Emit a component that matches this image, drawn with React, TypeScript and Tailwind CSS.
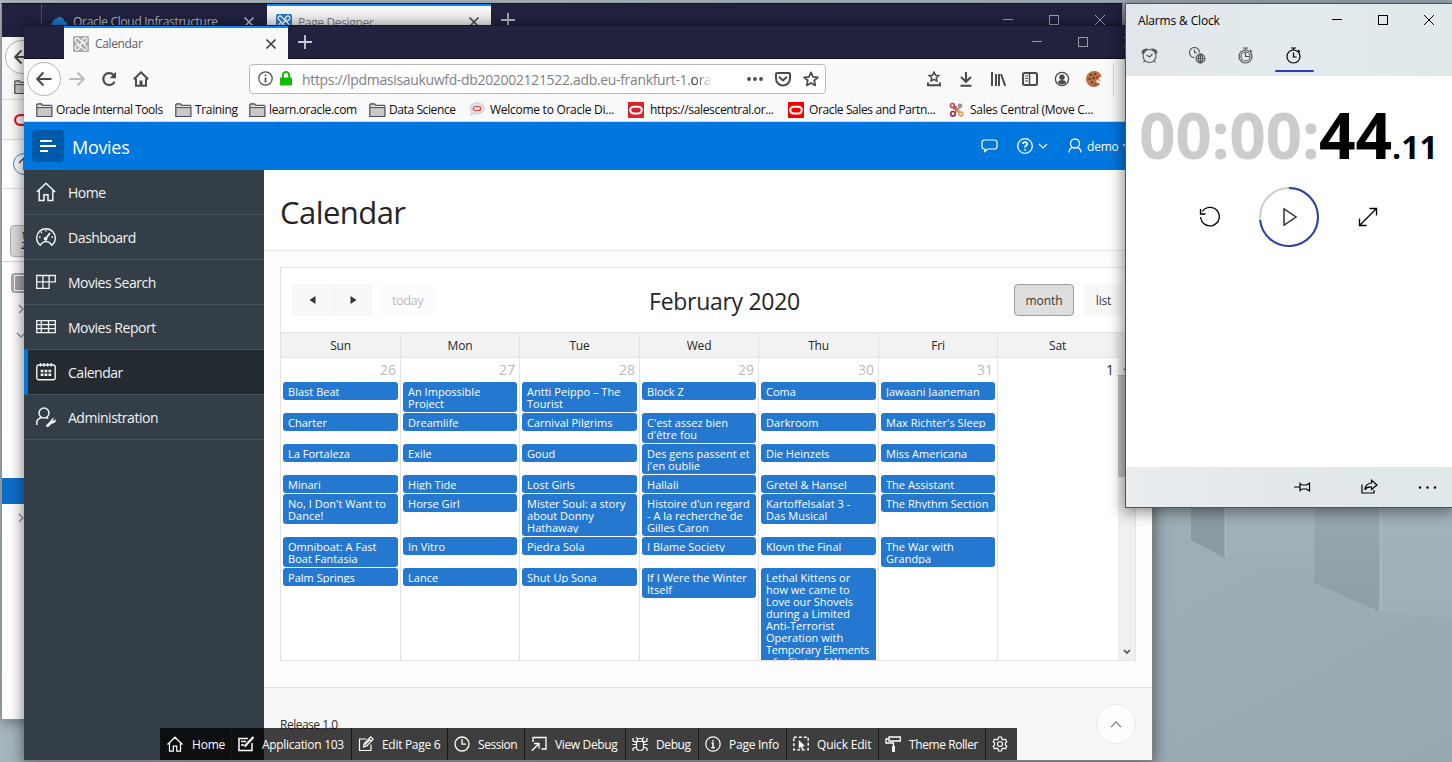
import type { ReactNode } from "react";

const FONT = "font-['Open_Sans','Noto_Sans',sans-serif]";

type IconProps = { className?: string };

function Svg({ size = 16, h, sw = 1.2, vb, className = "", children }: { size?: number; h?: number; sw?: number; vb?: string; className?: string; children: ReactNode }) {
  return (
    <svg width={size} height={h ?? size} viewBox={vb ?? `0 0 ${size} ${h ?? size}`} fill="none" stroke="currentColor" strokeWidth={sw} className={`block shrink-0 ${className}`}>
      {children}
    </svg>
  );
}

function ApexIcon({ fill }: { fill: string }) {
  return (
    <Svg>
      <rect width="16" height="16" rx="1.5" fill={fill} stroke="none" />
      <g strokeLinecap="round">
        <path d="M12 4l-8 8" stroke="#fff" strokeWidth="5" />
        <path d="M12 4l-8 8" stroke={fill} strokeWidth="2.800" />
        <path d="M4 4l8 8" stroke="#fff" strokeWidth="5" />
        <path d="M4 4l8 8" stroke={fill} strokeWidth="2.800" />
        <path d="M10.500 5.500l-5 5" stroke="#fff" strokeWidth="1.200" />
      </g>
    </Svg>
  );
}

function Folder({ className }: IconProps) {
  return (
    <Svg size={17} h={14} sw={1.2} className={className}>
      <path d="M.8 13V1.8q0-1 1-1h3.6l1.4 1.6H15q.9 0 .9.9V13q0 .5-.5.5H1.3q-.5 0-.5-.5z" fill="#c9c9cb" stroke="#4a4a4f" />
      <path d="M1.4 3.500h14" stroke="#e8e8ea" />
      <path d="M1.2 4.600h14.4" stroke="#4a4a4f" strokeWidth="1" />
    </Svg>
  );
}

function Close({ className }: IconProps) {
  return (
    <Svg size={12} sw={1.7} className={className}>
      <path d="M1.5 1.5l9 9M10.500 1.5l-9 9" />
    </Svg>
  );
}

function Plus({ className }: IconProps) {
  return (
    <Svg size={14} sw={1.8} className={className}>
      <path d="M7 0v14M0 7h14" />
    </Svg>
  );
}

function WinButtons({ className = "" }: IconProps) {
  return (
    <div className={`flex items-center ${className}`}>
      <Svg size={10} sw={1} className="mr-9"><path d="M0 4.500h10" /></Svg>
      <Svg size={10} sw={1} className="mr-9"><rect x=".5" y=".5" width="9" height="9" /></Svg>
      <Svg size={10} sw={1}><path d="M0 0l10 10M10 0L0 10" /></Svg>
    </div>
  );
}

function BackArrow() {
  return (
    <Svg size={16} sw={2}><path d="M15.500 8H1.500M7.500 1.500L1.200 8l6.300 6.500" /></Svg>
  );
}

function OracleMark({ bg }: { bg: string }) {
  return (
    <Svg sw={2}>
      <rect width="16" height="16" fill={bg} stroke="none" />
      <rect x="2.200" y="4.700" width="11.600" height="6.800" rx="3.400" stroke="#fff" />
    </Svg>
  );
}

function BackWindow() {
  return (
    <section className="absolute left-[1px] top-[3px] h-[717px] w-[1122px] overflow-hidden border border-[#8b959b] border-t-[#10122a] bg-white shadow-[0_2px_12px_rgba(0,0,0,0.35)]">
      <div className="flex h-[33px] items-start bg-[#20223e] text-[#aeb0bd]">
        <div className="ml-[39px] flex h-full w-[226px] items-center border-l border-[#4b4d64] pl-[9px] pt-0.5">
          <Svg size={16} h={12}><path d="M2.500 11.500a2.500 2.500 0 01-.8-4.800A3.600 3.600 0 015 3a4.300 4.300 0 018 2.500 3 3 0 01.6 6z" fill="#1a72c4" stroke="none" /></Svg>
          <span className="ml-1.5 w-[170px] whitespace-nowrap text-[12px] tracking-[-0.3px]">Oracle Cloud Infrastructure</span>
          <Close />
        </div>
        <div className="flex h-full w-[224px] items-center border-t-2 border-[#0a84ff] bg-gradient-to-b from-[#fafafa] to-[#d8d8d8] pl-[9px] text-[#77777c]">
          <ApexIcon fill="#2b78bd" />
          <span className="ml-1.5 w-[170px] pt-0.5 text-[12px] tracking-[-0.35px]">Page Designer</span>
          <Close className="text-[#4a4a4f]" />
        </div>
        <Plus className="ml-[10px] mt-[9px]" />
        <WinButtons className="ml-auto mr-[17px] mt-[11px] text-[#9a9bab]" />
      </div>
      <div className="flex w-[22px] flex-col overflow-hidden">
        <div className="flex h-[62px] flex-col bg-[#f9f9fa]">
          <div className="ml-[3px] mt-[3px] grid size-[34px] shrink-0 place-items-center rounded-full border border-[#b5b5b7] bg-white text-[#4a4a4f]"><BackArrow /></div>
          <Folder className="ml-3 mt-[6px]" />
        </div>
        <div className="flex h-[41px] items-center border-y border-[#d9d9da] bg-[#fafafa] pl-3">
          <Svg size={22} h={12} sw={2.200}><rect x="1.100" y="1.100" width="19" height="9.800" rx="4.900" stroke="#dd1a1f" /></Svg>
        </div>
        <div className="flex h-[49px] items-center border-b border-[#dcdcdc] pl-[11px]">
          <Svg size={22} sw={1}><circle cx="11" cy="11" r="10.500" stroke="#3b8ed0" /><path d="M6 10l5-5 5 5M11 5v12" stroke="#555" strokeWidth="1.500" /></Svg>
        </div>
        <div className="h-[73px] border-b border-[#d5d5d5] pt-9">
          <div className="ml-2 h-8 w-8 rounded-sm border border-[#b0b0b0] bg-[#dedede] pl-[10px] pt-[5px] text-[9px] leading-[10px] text-black">1<br />2</div>
        </div>
        <div className="flex h-[216px] flex-col text-[#888]">
          <div className="ml-[9px] mt-[11px] h-5 w-8 rounded-sm bg-[#ababab] py-0.5 pl-[3px]"><div className="h-4 w-4 border border-white bg-[#a5a5a5]" /></div>
          <Svg size={6} h={10} className="ml-4 mt-[11px]"><path d="M1 1l4 4-4 4" /></Svg>
          <Svg size={10} h={6} className="ml-[14px] mt-[18px]"><path d="M1 1l4 4 4-4" /></Svg>
        </div>
        <div className="h-[26px] bg-[#0f6fc8]" />
        <Svg size={6} h={10} className="ml-4 mt-[9px] text-[#888]"><path d="M1 1l4 4-4 4" /></Svg>
      </div>
    </section>
  );
}

const bookmarks: { label: string; width: string; text: string; icon: ReactNode }[] = [
  { label: "Oracle Internal Tools", width: "w-[139px]", text: "ml-[3px] tracking-[-0.45px]", icon: <Folder /> },
  { label: "Training", width: "w-[74px]", text: "ml-[3px] tracking-[-0.35px]", icon: <Folder /> },
  { label: "learn.oracle.com", width: "w-[120px]", text: "ml-[3px] tracking-[-0.35px]", icon: <Folder /> },
  { label: "Data Science", width: "w-[100px]", text: "ml-[3px] tracking-[-0.4px]", icon: <Folder /> },
  {
    label: "Welcome to Oracle Di...", width: "w-[159px]", text: "ml-[5px] tracking-[-0.27px]",
    icon: (
      <Svg>
        <path d="M8 1c4 0 7 2.200 7 5.200S12 12 8 12c-1 0-1.800-.1-2.600-.3L2 13.500l1-3C1.700 9.400 1 8 1 6.300 1 3.200 4 1 8 1z" fill="#e2e0e0" stroke="#bdbdbd" strokeWidth=".7" />
        <rect x="4.300" y="4.500" width="7.400" height="4" rx="2" stroke="#dc4a4a" />
      </Svg>
    ),
  },
  { label: "https://salescentral.or...", width: "w-[160px]", text: "ml-[6px] tracking-[-0.33px]", icon: <OracleMark bg="#d8232b" /> },
  { label: "Oracle Sales and Partn...", width: "w-[161px]", text: "ml-[5px] tracking-[-0.38px]", icon: <OracleMark bg="#f00505" /> },
  {
    label: "Sales Central (Move C...", width: "w-[150px]", text: "ml-[5px] tracking-[-0.28px]",
    icon: (
      <Svg sw={1.700}>
        <path d="M5 5l6 6M11 5l-6 6" stroke="#9b7b74" />
        <circle cx="3.500" cy="3.500" r="2" stroke="#d4454c" /><circle cx="5.800" cy="5.800" r="1.300" stroke="#d4454c" /><circle cx="11" cy="3.800" r="1.500" stroke="#8d8d8d" />
        <circle cx="4" cy="11.800" r="2.300" stroke="#9a2f52" /><circle cx="12" cy="12" r="1.800" stroke="#e6a153" /><circle cx="9.800" cy="9.800" r="1" stroke="#e6a153" />
      </Svg>
    ),
  },
];

function BrowserChrome() {
  return (
    <header className="shrink-0">
      <div className="flex h-[34px] items-start border-b border-t border-b-[#0d0e1c] border-t-[#15162c] bg-[#20223e]">
        <div className="ml-[40px] flex h-[34px] w-[224px] items-center border-t-2 border-[#0a84ff] bg-[#f9f9fa] pl-[9px] text-[#5c5c61]">
          <ApexIcon fill="#a9adb0" />
          <span className="ml-1.5 w-[170px] text-[12px] tracking-[-0.35px]">Calendar</span>
          <Close className="text-[#3f3f44]" />
        </div>
        <Plus className="ml-[10px] mt-[9px] text-[#c8c9d2]" />
        <WinButtons className="ml-auto mr-[18px] mt-[11px] text-[#9a9bab]" />
      </div>
      <div className="flex h-[39px] items-center bg-[#f9f9fa] pl-[3px] text-[#4a4a4f]">
        <div className="grid size-[34px] place-items-center rounded-full border border-[#b5b5b7] bg-white"><BackArrow /></div>
        <Svg size={16} sw={2} className="ml-2 text-[#b9b9bb]"><path d="M.5 8h14M8.500 1.500l6.300 6.500-6.300 6.500" /></Svg>
        <Svg size={16} sw={2} className="ml-4"><path d="M13.600 10.800A6 6 0 118 2c2.200 0 4 1 5.200 3" /><path d="M15 .8v6.400H8.600z" fill="currentColor" stroke="none" /></Svg>
        <Svg size={16} sw={2} className="ml-4"><path d="M.8 8.300L8 1.300l7.200 7" /><path d="M3 7.500v7.300h10V7.500" /><path d="M8 15V9.500" strokeWidth="3" /></Svg>
        <div className="ml-[100px] flex h-[30px] w-[577px] items-center rounded-sm border border-[#b9b9bb] bg-white pl-2">
          <Svg size={15} sw={1.200}><circle cx="7.500" cy="7.500" r="6.700" /><path d="M7.500 6.500v5M7.500 3.500v1.600" strokeWidth="1.700" /></Svg>
          <Svg size={14} h={15} className="ml-[6px] text-[#12bc00]"><rect x="1" y="6.500" width="12" height="8" rx="1.300" fill="currentColor" stroke="none" /><path d="M3.800 7V4.300a3.200 3.200 0 016.400 0V7" strokeWidth="2" /></Svg>
          <span className="ml-[9px] w-[445px] whitespace-nowrap pt-0.5 text-[14px] tracking-[-0.33px] text-[#808083]">https://lpdmasisaukuwfd-db202002121522.adb.eu-frankfurt-1.<span className="bg-gradient-to-r from-[#1c1c1e] to-white bg-clip-text text-transparent">ora</span></span>
          <Svg size={16} h={4}><g fill="currentColor" stroke="none"><circle cx="2" cy="2" r="1.900" /><circle cx="8" cy="2" r="1.900" /><circle cx="14" cy="2" r="1.900" /></g></Svg>
          <Svg size={16} sw={2} className="ml-3"><path d="M2.200 2h11.600q1.200 0 1.200 1.200V7.500a7 7 0 01-14 0V3.200Q1 2 2.200 2z" /><path d="M4.500 6.300L8 9.500l3.500-3.200" strokeLinecap="round" /></Svg>
          <Svg size={16} sw={1.700} className="ml-3"><path d="M8 1.300l2 4.500 4.900.5-3.700 3.200 1.100 4.900L8 11.900l-4.300 2.500 1.100-4.900L1.100 6.300 6 5.800z" strokeLinejoin="round" /></Svg>
        </div>
        <Svg size={16} sw={1.500} className="ml-[100px]"><path d="M8 1.200l1.500 3 3.300.4-2.500 2.200.7 3.300L8 8.400l-3 1.700.7-3.300L3.200 4.600l3.300-.4z" /><path d="M2 11.500V14.300h12v-2.800" strokeWidth="2" /></Svg>
        <Svg size={16} sw={2} className="ml-4"><path d="M8 1v9.500M3 6l5 4.800L13 6M2.500 14.800h11" /></Svg>
        <Svg size={16} sw={2} className="ml-4"><path d="M2 1v14M6 3v12M9 3v12M11 3l4.200 12" /></Svg>
        <Svg size={16} sw={2} className="ml-4"><rect x="1" y="2" width="14" height="12" rx="1.500" /><path d="M7.500 2v12" strokeWidth="1.500" /><path d="M3 5h3M3 7.500h3M3 10h3" strokeWidth="1" /></Svg>
        <Svg size={16} sw={1.300} className="ml-4"><circle cx="8" cy="8" r="6.600" /><circle cx="8" cy="6.200" r="2.700" fill="currentColor" stroke="none" /><path d="M3.800 11.500c.8-1.700 2.200-2.400 4.200-2.400s3.400.7 4.200 2.400A5.400 5.400 0 018 13.500a5.400 5.400 0 01-4.200-2z" fill="currentColor" stroke="none" /></Svg>
        <Svg size={16} className="ml-4"><path d="M8 0a8 8 0 106 13.300l-1.700-1.800-1.600.3-.4-2.200 2.500-1.200.5-2 2.300-.9A8 8 0 008 0z" fill="#b96f45" stroke="none" /><g fill="#5a2e1c" stroke="none"><circle cx="5" cy="4" r="1.100" /><circle cx="9" cy="3" r="1" /><circle cx="3.500" cy="8" r="1.100" /><circle cx="7.500" cy="7" r="1.100" /><circle cx="6" cy="11.500" r="1.100" /><circle cx="11" cy="6.500" r=".8" /><circle cx="9.500" cy="13.500" r=".8" /></g><circle cx="13.500" cy="9.500" r="1" fill="#d79a72" stroke="none" /></Svg>
        <div className="ml-[11px] mt-0.5 h-[34px] w-px bg-[#d7d7db]" />
      </div>
      <div className="flex h-[24px] items-center border-b border-[#d5d5d7] bg-[#f9f9fa] pl-3">
        {bookmarks.map((b) => (
          <div key={b.label} className={`flex shrink-0 items-center ${b.width}`}>
            {b.icon}
            <span className={`whitespace-nowrap pt-px text-[12px] leading-4 text-[#0c0c0d] ${b.text}`}>{b.label}</span>
          </div>
        ))}
      </div>
    </header>
  );
}

const nav: { label: string; icon: ReactNode }[] = [
  { label: "Home", icon: <Svg size={20} sw={1.500}><path d="M.8 10L10 1.300 19.200 10M3.200 8.200v10.300H8v-5.800h4v5.800h4.800V8.200" /></Svg> },
  { label: "Dashboard", icon: <Svg size={20} sw={1.400}><path d="M4.200 18.300A9.300 9.300 0 1115.800 18.300L14 16a6.500 6.500 0 00-8 0z" /><path d="M9.500 12l4.500-6" strokeWidth="1.800" /><path d="M10 3v1.600M5 5l1 1M3 10h1.600M17 10h-1.600" /><circle cx="9.600" cy="11.800" r="1.200" fill="currentColor" /></Svg> },
  { label: "Movies Search", icon: <Svg size={20} sw={1.300}><path d="M.7 3.500h18.600v6.300h-6.200v6.500H.7zM.7 9.800h12.400M6.900 3.500v12.800M13.100 3.500v6.300" /></Svg> },
  { label: "Movies Report", icon: <Svg size={20} sw={1.300}><path d="M.7 3.700h18.600v12H.7zM.7 7.700h18.600M.7 11.700h18.600M5.300 3.700v12M12.500 3.700v12" /></Svg> },
  { label: "Calendar", icon: <Svg size={20} sw={1.400}><rect x=".8" y="3" width="18.400" height="14.800" rx="2" /><path d="M4.500 1v3.500M8 1v3.500M11.700 1v3.500M15.300 1v3.500" /><path d="M4.700 9h2.700M8.600 9h2.700M12.500 9h2.700M4.700 12.700h2.700M8.600 12.700h2.700M12.500 12.700h2.700" strokeWidth="2.600" /></Svg> },
  { label: "Administration", icon: <Svg size={20} sw={1.500}><circle cx="8" cy="6" r="5" /><path d="M.8 18v-2.500c0-2.400 1.700-4 4.700-5M10.500 10.800l1.800.8" /><path d="M11.500 18.800l4-3.800" strokeWidth="2.800" strokeLinecap="round" /><path d="M18 11.200l-1.800 1.800.8 1 2.600-1.200q.3 3.200-3.600 3.500-2.200-1.700-.6-3.800 1-1.300 2.600-1.300z" fill="currentColor" strokeWidth=".5" /></Svg> },
];

type Day = { day: string; date: string; width: string; events: string[][] };

const days: Day[] = [
  { day: "Sun", date: "26", width: "w-[120px]", events: [["Blast Beat"], ["Charter"], ["La Fortaleza"], ["Minari"], ["No, I Don't Want to", "Dance!"], ["Omniboat: A Fast", "Boat Fantasia"], ["Palm Springs"]] },
  { day: "Mon", date: "27", width: "w-[119px]", events: [["An Impossible", "Project"], ["Dreamlife"], ["Exile"], ["High Tide"], ["Horse Girl"], ["In Vitro"], ["Lance"]] },
  { day: "Tue", date: "28", width: "w-[120px]", events: [["Antti Peippo – The", "Tourist"], ["Carnival Pilgrims"], ["Goud"], ["Lost Girls"], ["Mister Soul: a story", "about Donny", "Hathaway"], ["Piedra Sola"], ["Shut Up Sona"]] },
  { day: "Wed", date: "29", width: "w-[119px]", events: [["Block Z"], ["C'est assez bien", "d'être fou"], ["Des gens passent et", "j'en oublie"], ["Hallali"], ["Histoire d'un regard", "- A la recherche de", "Gilles Caron"], ["I Blame Society"], ["If I Were the Winter", "Itself"]] },
  { day: "Thu", date: "30", width: "w-[120px]", events: [["Coma"], ["Darkroom"], ["Die Heinzels"], ["Gretel & Hansel"], ["Kartoffelsalat 3 -", "Das Musical"], ["Klovn the Final"], ["Lethal Kittens or", "how we came to", "Love our Shovels", "during a Limited", "Anti-Terrorist", "Operation with", "Temporary Elements", "of a State of War"]] },
  { day: "Fri", date: "31", width: "w-[119px]", events: [["Jawaani Jaaneman"], ["Max Richter's Sleep"], ["Miss Americana"], ["The Assistant"], ["The Rhythm Section"], ["The War with", "Grandpa"]] },
  { day: "Sat", date: "1", width: "w-[120px]", events: [] },
];

const rowHeights = ["h-[31px]", "h-[31px]", "h-[31px]", "h-[19px]", "h-[43px]", "h-[31px]", "h-[140px]"];

function CalendarCard() {
  return (
    <div className="flex h-[394px] w-[856px] flex-col border border-[#e4e4e4] bg-white">
      <div className="grid h-[64px] shrink-0 grid-cols-3 items-center pl-3 pr-3">
        <div className="flex text-[13px]">
          <div className="flex h-8 w-[79px] rounded-sm border border-[#f3f3f3] bg-[#f8f8f8] text-[#333]">
            <span className="grid flex-1 place-items-center border-r border-[#f1f1f1] pr-1"><Svg size={7} h={8}><path d="M6.500 0v8L.5 4z" fill="currentColor" stroke="none" /></Svg></span>
            <span className="grid flex-1 place-items-center"><Svg size={7} h={8}><path d="M.5 0v8l6-4z" fill="currentColor" stroke="none" /></Svg></span>
          </div>
          <div className="ml-2 grid h-8 w-[55px] place-items-center rounded-sm bg-[#fcfcfc] pt-0.5 tracking-[-0.6px] text-[#bdbdbd]">today</div>
        </div>
        <h2 className="whitespace-nowrap pl-[33px] pt-0.5 text-center text-[23px] leading-8 tracking-[-0.3px] text-[#262626]">February 2020</h2>
        <div className="flex justify-end gap-[10px] text-[12px] tracking-[-0.1px] text-[#383838]">
          <div className="grid h-8 w-[60px] place-items-center rounded-sm border border-[#9c9c9c] bg-[#dedede] pt-0.5">month</div>
          <div className="grid h-8 w-[39px] place-items-center rounded-sm bg-[#f8f8f8] pt-0.5 tracking-[-0.2px]">list</div>
        </div>
      </div>
      <div className="flex h-[26px] shrink-0 border-y border-[#e4e4e4] bg-[#f2f2f2] text-[12px] tracking-[-0.2px] text-[#262626]">
        {days.map((d) => (
          <div key={d.day} className={`grid shrink-0 place-items-center border-r border-[#e4e4e4] pt-0.5 ${d.width}`}>{d.day}</div>
        ))}
      </div>
      <div className="flex min-h-0 flex-1 overflow-hidden">
        {days.map((d) => (
          <div key={d.day} className={`flex shrink-0 flex-col ${d.day === "Sat" ? "" : "border-r border-[#e4e4e4]"} ${d.width}`}>
            <div className={`h-6 shrink-0 text-right text-[14px] leading-6 ${d.date === "1" ? "pr-1 text-[#333]" : "pr-1 text-[#bbb]"}`}>{d.date}</div>
            {d.events.map((lines, i) => (
              <div key={lines[0]} className={`shrink-0 px-0.5 ${rowHeights[i]}`}>
                <div className="rounded-[3px] bg-[#2578cf] py-[3px] pl-[5px]">
                  <div className="overflow-hidden text-[11px] leading-3 text-white">
                    <div className="-mb-px mt-px">
                      {lines.map((l) => (
                        <div key={l} className={`whitespace-nowrap ${l.startsWith("Temporary") ? "tracking-[-0.2px]" : "tracking-[0.02px]"}`}>{l}</div>
                      ))}
                    </div>
                  </div>
                </div>
              </div>
            ))}
          </div>
        ))}
        <div className="flex flex-1 flex-col items-center bg-[#f0f0f0] text-[#505050]">
          <div className="flex h-[18px] w-full justify-center border-b border-[#aaa] pt-2"><Svg size={8} h={5} sw={1.500}><path d="M1 4l3-3 3 3" /></Svg></div>
          <div className="h-[101px] w-full bg-[#c1c1c1]" />
          <Svg size={8} h={5} sw={1.700} className="mb-[6px] mt-auto"><path d="M1 1l3 3 3-3" /></Svg>
        </div>
      </div>
    </div>
  );
}

const devItems: { label: string; width: string; icon: ReactNode }[] = [
  { label: "Home", width: "w-[72px] tracking-[-0.2px]", icon: <Svg sw={1.200} className="mr-px"><path d="M.5 8.500L8 1.200l7.500 7.300M2.500 7v8.200h3.800v-5h3.400v5h3.800V7" /></Svg> },
  { label: "Application 103", width: "w-[120px] tracking-[-0.3px]", icon: <Svg sw={1.500}><path d="M10 2.500H1v12h13V7M3 5.500h5M3 9h3" /><path d="M6.500 10.500L15.500 1" strokeWidth="2.200" /></Svg> },
  { label: "Edit Page 6", width: "w-[96px] tracking-[-0.3px]", icon: <Svg sw={1.200}><path d="M8.500 3H1.500v11.500H13V8.500" /><path d="M5.500 10.800l.7-3.300 6.600-6.600 2.400 2.400-6.600 6.600zM11 2.800l2.300 2.300M7 8.700l5-5" /></Svg> },
  { label: "Session", width: "w-[77px] tracking-[-0.45px]", icon: <Svg sw={1.300}><circle cx="8" cy="8" r="7" /><path d="M8 3v5.200h4" /></Svg> },
  { label: "View Debug", width: "w-[101px] tracking-[-0.35px]", icon: <Svg sw={1.300}><path d="M2 6V1.500h13v11.500H10.500" /><path d="M.8 14.800l7-7M3 7.500h5v5" /></Svg> },
  { label: "Debug", width: "w-[73px] tracking-[-0.4px]", icon: <Svg sw={1.200}><path d="M4.500 5.500h7v6q0 3-3.500 3t-3.500-3zM5 5.500q0-3 3-3t3 3M.5 8.500h4M11.500 8.500h4M1 2v3l3.500 1.500M15 2v3l-3.500 1.500M1 15v-2.500l3.500-1.500M15 15v-2.500L11.500 11M5.500 3L4 1M10.500 3L12 1" /></Svg> },
  { label: "Page Info", width: "w-[88px] tracking-[-0.25px]", icon: <Svg sw={1.200}><circle cx="8" cy="8" r="7.200" /><path d="M6.500 7H8v4.500M6.300 11.700h3.600M8 4v1.500" strokeWidth="1.500" /></Svg> },
  { label: "Quick Edit", width: "w-[92px] tracking-[-0.2px]", icon: <Svg sw={1.400}><rect x=".8" y="1.200" width="14.400" height="12.600" strokeDasharray="3 2" /><path d="M5.500 3.500v9.800l2.300-2 1.600 4 2-.8-1.600-4h3z" fill="currentColor" stroke="#3d3d3d" strokeWidth=".6" /></Svg> },
  { label: "Theme Roller", width: "w-[107px] tracking-[-0.42px]", icon: <Svg size={16} h={16} sw={1.300}><path d="M4 1h11.300v4H4zM4 3H1v4h7.500v3.500" /><path d="M8.500 10v6" strokeWidth="2.800" /></Svg> },
  { label: "", width: "w-[31px]", icon: <Svg sw={1.200}><circle cx="8" cy="8" r="2.500" /><path d="M6.600 1h2.800l.5 2 1.500.8 2-.6 1.400 2.400L13.400 7v2l1.400 1.400-1.400 2.400-2-.6-1.500.8-.5 2H6.600l-.5-2-1.500-.8-2 .6-1.400-2.400L2.600 9V7L1.200 5.600l1.400-2.400 2 .6L6.100 3z" /></Svg> },
];

function MainWindow() {
  return (
    <section className="absolute left-6 top-[25px] flex h-[736px] w-[1129px] flex-col overflow-hidden border-b border-r border-[#7d8589] bg-white shadow-[0_3px_14px_1px_rgba(0,0,0,0.5)]">
      <BrowserChrome />
      <div className="flex h-[48px] shrink-0 items-center bg-[#0076df] pl-2 text-white">
        <div className="grid size-8 place-items-center rounded-sm bg-[#0059a9]">
          <Svg size={16} sw={1.800}><path d="M0 3h12M0 8h16M0 13h8" /></Svg>
        </div>
        <span className="ml-2 pt-0.5 text-[18px] tracking-[-0.3px]">Movies</span>
        <div className="ml-auto flex items-center">
          <Svg size={17} h={16} sw={1.200}><path d="M3.500 2h10q2.500 0 2.500 2.500v4Q16 11 13.500 11H7l-3.200 2.500L4 11H3.500Q1 11 1 8.500v-4Q1 2 3.500 2z" /></Svg>
          <Svg size={16} sw={1.300} className="ml-[19px]"><circle cx="8" cy="8" r="7.300" /><path d="M5.800 6q.2-1.800 2.200-1.800T10.200 6c0 1.400-2.200 1.700-2.200 3.400M8 11v1.600" strokeWidth="1.700" /></Svg>
          <Svg size={10} h={7} className="ml-[5px]"><path d="M1 1l4 4 4-4" /></Svg>
          <Svg size={14} h={16} sw={1.300} className="ml-5"><circle cx="7" cy="5.500" r="4.500" /><path d="M1 14.500q0-3.800 3.500-4.800M13 14.500q0-3.800-3.500-4.800" /></Svg>
          <span className="ml-[5px] w-[32px] pt-0.5 text-[12px] tracking-[-0.2px]">demo</span>
          <Svg size={10} h={7} className="ml-[3px] mr-[20px]"><path d="M1 1l4 4 4-4" /></Svg>
        </div>
      </div>
      <div className="flex min-h-0 flex-1">
        <nav className="w-[240px] shrink-0 bg-[#343e46] text-[#f2f3f3]">
          {nav.map((n) => (
            <div key={n.label} className={`flex h-[45px] items-center border-b border-[#475058] ${n.label === "Calendar" ? "border-l-4 border-l-[#0076df] bg-[#242b30] pl-2" : "pl-3"}`}>
              {n.icon}
              <span className="ml-3 text-[14px] tracking-[-0.48px]">{n.label}</span>
            </div>
          ))}
        </nav>
        <main className="flex min-w-0 flex-1 flex-col bg-[#fdfdfd]">
          <div className="flex h-[81px] shrink-0 items-center border-b border-[#e4e4e4] bg-white pl-4 pt-1">
            <h1 className="text-[31px] tracking-[-0.55px] text-[#262626]">Calendar</h1>
          </div>
          <div className="h-[436px] shrink-0 pl-4 pt-4"><CalendarCard /></div>
          <footer className="flex flex-1 items-start border-t border-[#e4e4e4] bg-[#f7f7f7] pl-4 pr-4 pt-4">
            <span className="mt-3 text-[12px] tracking-[-0.5px] text-[#2b2b2b]">Release 1.0</span>
            <div className="ml-auto grid size-10 place-items-center rounded-full border border-[#e8e8e8] bg-[#fdfdfd] text-[#888]">
              <Svg size={12} h={7} sw={1.300}><path d="M1 6l5-5 5 5" /></Svg>
            </div>
          </footer>
        </main>
      </div>
      <div className="absolute bottom-0 left-[136px] flex h-8 bg-black/75 text-[12px] text-white">
        {devItems.map((d) => (
          <div key={d.width} className={`flex shrink-0 items-center border-r border-[#151515] pl-[6px] first:pl-[7px] last:border-r-0 ${d.width}`}>
            {d.icon}
            <span className="ml-2 whitespace-nowrap pt-0.5">{d.label}</span>
          </div>
        ))}
      </div>
    </section>
  );
}

function AlarmsWindow() {
  return (
    <section className="absolute left-[1125px] top-[3px] flex h-[505px] w-[327px] flex-col border-b border-l border-t border-[#4e5558] bg-white text-black shadow-[0_2px_14px_2px_rgba(0,0,0,0.45)]">
      <div className="flex h-[72px] flex-col bg-gradient-to-r from-[#e1e6ea] via-[#e3ebee] to-[#e0e8ea]">
        <div className="flex h-8 items-center pl-3">
          <span className="pt-px text-[12px] tracking-[-0.15px]">Alarms &amp; Clock</span>
          <WinButtons className="ml-auto mr-[18px]" />
        </div>
        <div className="flex h-[40px] text-[#555]">
          <div className="flex w-[48px] justify-center pr-px pt-[11px]"><Svg size={17} h={17} sw={1.100}><circle cx="8.500" cy="9" r="6.500" /><path d="M5.500 8l3 2 3-3" /><path d="M1 6q0-3.500 4.500-4L2 6zM16 6q0-3.500-4.500-4L15 6zM3.800 14l-1.300 1.500M13.200 14l1.300 1.500" fill="currentColor" /></Svg></div>
          <div className="flex w-[48px] justify-center pr-px pt-[11px]"><Svg size={17} h={17} sw={1.100}><path d="M5.500 10.500a5 5 0 115-5M5.500 2.500v3.300h2.500" /><circle cx="11.500" cy="11.500" r="4.500" /><path d="M7 11.500h9M11.500 7v9M8 9h7M8 14h7" /><ellipse cx="11.500" cy="11.500" rx="2" ry="4.500" /></Svg></div>
          <div className="flex w-[48px] justify-center pr-px pt-[11px]"><Svg size={17} h={17} sw={1.200}><circle cx="8.500" cy="9.500" r="6.500" /><circle cx="8.500" cy="9.500" r="4.500" /><path d="M8.500 5.500v4h4M6 1h5M8.500 1v2M13 3l2 2" /></Svg></div>
          <div className="flex w-[48px] justify-center pr-px pt-[11px] text-black"><Svg size={17} h={17} sw={1.200}><circle cx="8.500" cy="9.500" r="6.500" /><path d="M8.500 5.500v4.500h3M6 1h5M8.500 1v2M13 3l2 2" /></Svg></div>
        </div>
        <div className="-mt-[6px] ml-[149px] h-0.5 w-[39px] shrink-0 rounded bg-[#2a41a8]" />
      </div>
      <div className="flex h-[391px] flex-col">
        <div className="mt-4 flex h-[86px] items-baseline pl-[13px] text-[64px] font-bold leading-[86px]">
          <span className="w-[180px] whitespace-nowrap tracking-[-0.4px] text-[#cccccc]">00:00:</span>
          <span className="w-[73px] whitespace-nowrap">44</span>
          <span className="whitespace-nowrap text-[32px] leading-none">.11</span>
        </div>
        <div className="mt-[8px] flex h-[62px] items-center pl-[73px]">
          <Svg size={22} sw={1.300}><path d="M3.200 5.500A9.300 9.300 0 111.700 11" /><path d="M1.500 3v5h5" /></Svg>
          <Svg size={62} sw={2} className="ml-[37px]"><circle cx="31" cy="31" r="29" stroke="#cccccc" /><path d="M31 2a29 29 0 11-28.900 32" stroke="#2a41a8" /><path d="M26 23v16l12-8z" stroke="#333" strokeWidth="1.500" /></Svg>
          <Svg size={20} sw={1.300} className="ml-[38px]"><path d="M1.500 18.500l17-17M11.500 1.500h7v7M1.500 11.500v7h7" /></Svg>
        </div>
      </div>
      <div className="flex h-10 items-center bg-gradient-to-r from-[#e9edef] via-[#e2e8eb] to-[#dfe7ea] pl-[168px]">
        <Svg size={17} h={12} sw={1.200}><path d="M0 6h6M6 1.500v9M6 3l2.500 1h4L15.500 2v8l-3-2h-4L6 9" /></Svg>
        <Svg size={17} h={16} sw={1.200} className="ml-[50px]"><path d="M1 5.500V14h12v-3" /><path d="M10.500 1.200L16 6l-5.500 4.500V8Q6 7.500 3.800 10.800 4.500 4.500 10.500 4z" /></Svg>
        <Svg size={19} h={4} className="ml-[40px]"><g fill="currentColor" stroke="none"><circle cx="2" cy="2.500" r="1.200" /><circle cx="9.500" cy="2.500" r="1.200" /><circle cx="17" cy="2.500" r="1.200" /></g></Svg>
      </div>
    </section>
  );
}

function Wallpaper() {
  return (
    <svg className="absolute inset-0 block" width="1452" height="762" viewBox="0 0 1452 762">
      <defs>
        <linearGradient id="sky" x1="0" y1="0" x2="1" y2="1"><stop offset="0" stopColor="#b4bfc5" /><stop offset="0.700" stopColor="#a0b0b8" /><stop offset="1" stopColor="#98a9b1" /></linearGradient>
        <linearGradient id="side" x1="0" y1="0" x2="0" y2="1"><stop offset="0" stopColor="#99a9b1" /><stop offset="1" stopColor="#8e9ea6" /></linearGradient>
        <linearGradient id="front" x1="0" y1="0" x2="0" y2="1"><stop offset="0" stopColor="#a3b3ba" /><stop offset="1" stopColor="#9fafb6" /></linearGradient>
      </defs>
      <rect width="1452" height="762" fill="url(#sky)" />
      <path d="M1191 490h34v68l-34-18z" fill="#8b9ba3" />
      <path d="M1225 490h90v73l-90-6z" fill="url(#front)" />
      <path d="M1315 490h66v122l-67-29z" fill="url(#side)" />
      <path d="M1380 490h72v128l-72-6z" fill="url(#front)" />
      <path d="M1380.500 490v121M1225.500 490v66" stroke="#abb9bf" strokeWidth="2" />
    </svg>
  );
}

export default function App() {
  return (
    <div className={`relative h-[762px] w-[1452px] overflow-hidden ${FONT}`}>
      <Wallpaper />
      <BackWindow />
      <MainWindow />
      <AlarmsWindow />
    </div>
  );
}
